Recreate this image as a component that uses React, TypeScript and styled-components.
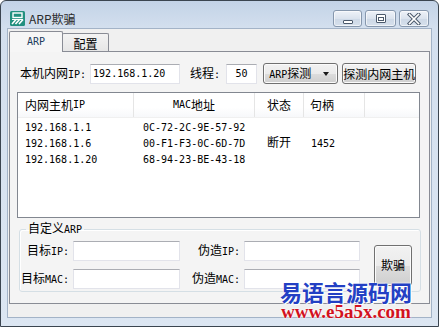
import React from 'react';
import styled, { createGlobalStyle } from 'styled-components';

const hosts = [
  { ip: '192.168.1.1', mac: '0C-72-2C-9E-57-92', state: '', handle: '' },
  { ip: '192.168.1.6', mac: '00-F1-F3-0C-6D-7D', state: '断开', handle: '1452' },
  { ip: '192.168.1.20', mac: '68-94-23-BE-43-18', state: '', handle: '' },
];

const AppIcon = () => (
  <svg width="15" height="15" viewBox="0 0 15 15">
    <rect x="0" y="0" width="15" height="15" rx="1.5" fill="#23907f" />
    <rect x="3" y="2" width="9" height="4.5" fill="none" stroke="#fff" strokeWidth="1.4" />
    <path d="M2 13 L6 8.5 M5.5 13 L9.5 8.5 M9 13 L13 8.5" stroke="#fff" strokeWidth="1.6" />
    <path d="M2 8.5 H13" stroke="#fff" strokeWidth="1.2" />
  </svg>
);

const MinGlyph = () => (
  <svg width="12" height="12" viewBox="0 0 12 12">
    <rect x="1.5" y="7.5" width="9" height="3" rx="0.5" fill="#fff" stroke="#4b596b" />
  </svg>
);

const MaxGlyph = () => (
  <svg width="12" height="12" viewBox="0 0 12 12">
    <rect x="1.5" y="1.5" width="9" height="8" rx="0.5" fill="#fff" stroke="#4b596b" />
    <rect x="3.5" y="4.5" width="5" height="3" fill="#fff" stroke="#4b596b" />
  </svg>
);

const CloseGlyph = () => (
  <svg width="14" height="12" viewBox="0 0 14 12">
    <path d="M2.5 1.5 L11.5 10.5 M11.5 1.5 L2.5 10.5" stroke="#4b596b" strokeWidth="3.6" strokeLinecap="square" />
    <path d="M2.5 1.5 L11.5 10.5 M11.5 1.5 L2.5 10.5" stroke="#fff" strokeWidth="1.6" strokeLinecap="square" />
  </svg>
);

const App = () => {
  return (
    <>
      <GlobalStyle />
      <Window>
        <TitleBar>
          <AppIcon />
          <Title>ARP欺骗</Title>
          <CaptionButtons>
            <CaptionButton $w={29}><MinGlyph /></CaptionButton>
            <CaptionButton $w={31}><MaxGlyph /></CaptionButton>
            <CaptionButton $w={30}><CloseGlyph /></CaptionButton>
          </CaptionButtons>
        </TitleBar>
        <Client>
          <TabStrip>
            <Tab $active>
              <TabMono>ARP</TabMono>
            </Tab>
            <Tab>配置</Tab>
          </TabStrip>
          <Panel>
            <TopRow>
              <Label>
                本机内网<Mono>IP:</Mono>
              </Label>
              <TextBox $w={90} $ml={4} defaultValue="192.168.1.20" />
              <Label $ml={10}>
                线程<Mono>:</Mono>
              </Label>
              <TextBox $w={31} $ml={6} $center defaultValue="50" />
              <Select>
                <span>
                  <Mono>ARP</Mono>探测
                </span>
                <Arrow />
              </Select>
              <PushButton $w={74} $h={21} $ml={4}>
                探测内网主机
              </PushButton>
            </TopRow>

            <ListView>
              <ListHeader>
                <HeaderCell $pl={7}>
                  内网主机<Mono>IP</Mono>
                </HeaderCell>
                <HeaderCell $center>
                  <Mono>MAC</Mono>地址
                </HeaderCell>
                <HeaderCell $pl={12}>状态</HeaderCell>
                <HeaderCell $pl={6}>句柄</HeaderCell>
                <HeaderCell $last />
              </ListHeader>
              <ListBody>
                {hosts.map((h) => (
                  <ListRow key={h.ip}>
                    <Cell $pl={7}>
                      <Mono>{h.ip}</Mono>
                    </Cell>
                    <Cell $pl={9}>
                      <Mono>{h.mac}</Mono>
                    </Cell>
                    <Cell $pl={12}>{h.state}</Cell>
                    <Cell $pl={7}>
                      <Mono>{h.handle}</Mono>
                    </Cell>
                  </ListRow>
                ))}
              </ListBody>
            </ListView>

            <GroupBox>
              <Legend>
                自定义<Mono>ARP</Mono>
              </Legend>
              <GroupGrid>
                <GridLabel>
                  目标<Mono>IP:</Mono>
                </GridLabel>
                <TextBox $w={107} />
                <GridLabel>
                  伪造<Mono>IP:</Mono>
                </GridLabel>
                <TextBox $w={116} />
                <SpoofButton $w={38} $h={41} $ml={14}>
                  欺骗
                </SpoofButton>
                <GridLabel>
                  目标<Mono>MAC:</Mono>
                </GridLabel>
                <TextBox $w={107} />
                <GridLabel>
                  伪造<Mono>MAC:</Mono>
                </GridLabel>
                <TextBox $w={116} />
              </GroupGrid>
            </GroupBox>
          </Panel>
        </Client>
        <Watermark>
          <WatermarkTitle>易语言源码网</WatermarkTitle>
          <WatermarkUrl>www.e5a5x.com</WatermarkUrl>
        </Watermark>
      </Window>
    </>
  );
};

export default App;

const GlobalStyle = createGlobalStyle`
  html, body {
    margin: 0;
    padding: 0;
    background: #ffffff;
  }
  body {
    font-family: 'Noto Sans CJK SC', sans-serif;
    font-size: 12px;
    color: #000;
  }
`;

const Window = styled.div`
  position: relative;
  width: 439px;
  height: 327px;
  box-sizing: border-box;
  border: 1px solid #3b4550;
  border-radius: 6px 6px 0 0;
  background: linear-gradient(180deg, #c3d3e7 0%, #d3dfee 27px, #dce6f2 100%);
  padding: 0 6px 8px 6px;
  display: flex;
  flex-direction: column;
  overflow: hidden;
`;

const TitleBar = styled.div`
  height: 27px;
  box-sizing: border-box;
  padding: 8px 3px 0 3px;
  display: flex;
  align-items: center;
`;

const Title = styled.span`
  margin-left: 4px;
  font-family: 'Noto Sans CJK SC', sans-serif;
  font-size: 12px;
  line-height: 14px;
  color: #2b2b2b;
`;

const CaptionButtons = styled.div`
  margin-left: auto;
  display: flex;
  gap: 3px;
`;

const CaptionButton = styled.div<{ $w: number }>`
  width: ${(p) => p.$w}px;
  height: 17px;
  box-sizing: border-box;
  border: 1px solid #8697ad;
  border-radius: 3px;
  background: linear-gradient(180deg, #eef2f8 0%, #dbe3ee 50%, #cdd8e6 51%, #d6e0ec 100%);
  box-shadow: inset 0 0 0 1px rgba(255, 255, 255, 0.6);
  display: flex;
  align-items: center;
  justify-content: center;
`;

const Client = styled.div`
  flex: 1;
  background: #f0f0f0;
  border: 1px solid #a3b3c7;
  padding: 0 1px;
  display: flex;
  flex-direction: column;
`;

const TabStrip = styled.div`
  height: 22px;
  display: flex;
  align-items: flex-end;
`;

const Tab = styled.div<{ $active?: boolean }>`
  position: relative;
  z-index: ${(p) => (p.$active ? 2 : 1)};
  box-sizing: border-box;
  width: ${(p) => (p.$active ? 54 : 47)}px;
  height: ${(p) => (p.$active ? 21 : 18)}px;
  margin-bottom: ${(p) => (p.$active ? -1 : 0)}px;
  margin-left: ${(p) => (p.$active ? 0 : -1)}px;
  border: 1px solid #898c95;
  border-bottom: none;
  border-radius: 2px 2px 0 0;
  background: ${(p) => (p.$active ? '#f6f6f6' : 'linear-gradient(180deg, #f3f3f3 0%, #e6e6e6 100%)')};
  display: flex;
  align-items: center;
  justify-content: center;
  padding-top: ${(p) => (p.$active ? 0 : 2)}px;
  font-size: 12px;
  line-height: 14px;
`;

const Mono = styled.span`
  font-family: 'DejaVu Sans Mono', monospace;
  font-size: 10px;
`;

const TabMono = styled(Mono)`
  color: #1d3d5c;
`;

const Panel = styled.div`
  height: 253px;
  box-sizing: border-box;
  border: 1px solid #898c95;
  background: #f4f4f4;
  padding: 11px 8px 0 7px;
  display: flex;
  flex-direction: column;
`;

const TopRow = styled.div`
  height: 21px;
  padding-left: 3px;
  display: flex;
  align-items: center;
`;

const Label = styled.span<{ $ml?: number }>`
  margin-left: ${(p) => p.$ml ?? 0}px;
  line-height: 14px;
  white-space: nowrap;
`;

const TextBox = styled.input<{ $w: number; $ml?: number; $center?: boolean }>`
  width: ${(p) => p.$w}px;
  height: 20px;
  margin: 0 0 0 ${(p) => p.$ml ?? 0}px;
  box-sizing: border-box;
  padding: 0 2px;
  border: 1px solid #e2e3ea;
  border-top-color: #abadb3;
  background: #fff;
  font-family: 'DejaVu Sans Mono', monospace;
  font-size: 10px;
  color: #000;
  text-align: ${(p) => (p.$center ? 'center' : 'left')};
  outline: none;
`;

const PushButton = styled.button<{ $w: number; $h: number; $ml?: number }>`
  width: ${(p) => p.$w}px;
  height: ${(p) => p.$h}px;
  margin: 0 0 0 ${(p) => p.$ml ?? 0}px;
  box-sizing: border-box;
  padding: 0;
  border: 1px solid #707070;
  border-radius: 3px;
  background: linear-gradient(180deg, #f2f2f2 0%, #ebebeb 50%, #dddddd 51%, #cfcfcf 100%);
  box-shadow: inset 0 0 0 1px #fbfbfb;
  font-family: 'Noto Sans CJK SC', sans-serif;
  font-size: 12px;
  line-height: 14px;
  color: #000;
`;

const Select = styled.div`
  width: 75px;
  height: 21px;
  margin-left: 6px;
  box-sizing: border-box;
  padding: 0 8px 0 5px;
  border: 1px solid #707070;
  border-radius: 3px;
  background: linear-gradient(180deg, #f2f2f2 0%, #ebebeb 50%, #dddddd 51%, #cfcfcf 100%);
  box-shadow: inset 0 0 0 1px #fbfbfb;
  display: flex;
  align-items: center;
  justify-content: space-between;
  line-height: 14px;
`;

const Arrow = styled.span`
  width: 0;
  height: 0;
  border-left: 3.5px solid transparent;
  border-right: 3.5px solid transparent;
  border-top: 4px solid #1a1a1a;
  margin-top: 1px;
`;

const ListView = styled.div`
  width: 403px;
  height: 126px;
  margin-top: 8px;
  box-sizing: border-box;
  border: 1px solid #828790;
  background: #fff;
`;

const columns = '116px 121px 49px 61px 1fr';

const ListHeader = styled.div`
  height: 24px;
  display: grid;
  grid-template-columns: ${columns};
  background: linear-gradient(180deg, #ffffff 0%, #ffffff 60%, #f7f8fa 100%);
  border-bottom: 1px solid #f0f0f0;
`;

const HeaderCell = styled.div<{ $pl?: number; $center?: boolean; $last?: boolean }>`
  display: flex;
  align-items: center;
  justify-content: ${(p) => (p.$center ? 'center' : 'flex-start')};
  padding-left: ${(p) => p.$pl ?? 0}px;
  border-right: ${(p) => (p.$last ? 'none' : '1px solid #e5e5e5')};
  line-height: 14px;
  white-space: nowrap;
`;

const ListBody = styled.div`
  padding-top: 0;
`;

const ListRow = styled.div`
  height: 16px;
  display: grid;
  grid-template-columns: ${columns};
`;

const Cell = styled.div<{ $pl: number }>`
  padding-left: ${(p) => p.$pl}px;
  line-height: 16px;
  white-space: nowrap;
`;

const GroupBox = styled.fieldset`
  width: 402px;
  margin: 3px 0 0 2px;
  padding: 4px 0 2px 0;
  box-sizing: border-box;
  min-width: 0;
  border: 1px solid #d5dfe5;
  border-radius: 3px;
  box-shadow: inset 1px 1px 0 #fff;
`;

const Legend = styled.legend`
  margin-left: 6px;
  padding: 0 2px;
  line-height: 14px;
  font-size: 12px;
`;

const GroupGrid = styled.div`
  display: grid;
  grid-template-columns: 53px 107px 64px 116px auto;
  grid-template-rows: 20px 20px;
  row-gap: 8px;
  align-items: center;
`;

const GridLabel = styled.span`
  text-align: right;
  padding-right: 4px;
  line-height: 14px;
  white-space: nowrap;
`;

const SpoofButton = styled(PushButton)`
  grid-column: 5;
  grid-row: 1 / span 2;
  align-self: center;
`;

const Watermark = styled.div`
  position: absolute;
  left: 279px;
  top: 279px;
  display: flex;
  flex-direction: column;
  align-items: center;
  pointer-events: none;
`;

const WatermarkTitle = styled.div`
  font-family: 'Noto Sans CJK SC', sans-serif;
  font-weight: 700;
  font-size: 22px;
  line-height: 23px;
  color: #2340c4;
  text-shadow: 0 0 2px #fff, 0 0 2px #fff, 1px 1px 0 #fff;
`;

const WatermarkUrl = styled.div`
  font-family: 'Liberation Serif', serif;
  font-weight: 700;
  font-size: 19px;
  line-height: 18px;
  color: #d2121f;
  text-shadow: 0 0 2px #fff, 0 0 2px #fff;
`;
